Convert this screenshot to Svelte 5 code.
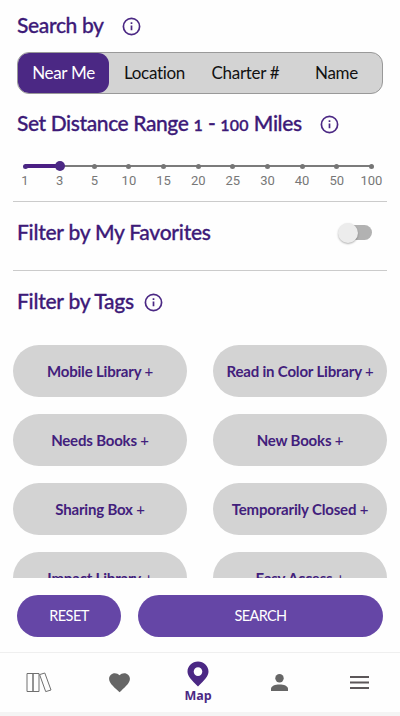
<script>
	let mode = $state('Near Me');
	let distance = $state(1);
	let favorites = $state(false);
	let selected = $state([]);

	const modes = ['Near Me', 'Location', 'Charter #', 'Name'];
	const stops = [1, 3, 5, 10, 15, 20, 25, 30, 40, 50, 100];
	const tags = [
		'Mobile Library',
		'Read in Color Library',
		'Needs Books',
		'New Books',
		'Sharing Box',
		'Temporarily Closed',
		'Impact Library',
		'Easy Access'
	];

	const toggleTag = (tag) => {
		selected = selected.includes(tag) ? selected.filter((t) => t !== tag) : [...selected, tag];
	};

	const reset = () => {
		mode = 'Near Me';
		distance = 1;
		favorites = false;
		selected = [];
	};
</script>

{#snippet info()}
	<svg class="info" viewBox="0 0 21 21" aria-hidden="true">
		<circle cx="10.500" cy="10.500" r="8.100" />
		<path d="M10.500 9.600v4.700M10.500 6.300v1.700" />
	</svg>
{/snippet}

<div class="screen">
	<main>
		<div class="heading search-by">
			<h2>Search by</h2>
			{@render info()}
		</div>

		<div class="segments">
			{#each modes as m}
				<button class:active={mode === m} onclick={() => (mode = m)}>{m}</button>
			{/each}
		</div>

		<div class="heading range">
			<h2>Set Distance Range <span class="small">1</span> - <span class="small">100</span> Miles</h2>
			{@render info()}
		</div>

		<div class="slider">
			{#each stops as stop, i}
				<button class="stop" class:filled={i < distance} class:last={i === stops.length - 1} onclick={() => (distance = i)}>
					<span class="track"><span class="dot" class:start={i < distance} class:thumb={i === distance}></span></span>
					<span class="num">{stop}</span>
				</button>
			{/each}
		</div>

		<div class="heading favorites">
			<h2>Filter by My Favorites</h2>
			<button class="switch" class:on={favorites} aria-label="My favorites" onclick={() => (favorites = !favorites)}>
				<span class="knob"></span>
			</button>
		</div>

		<div class="heading by-tags">
			<h2>Filter by Tags</h2>
			{@render info()}
		</div>

		<div class="tags">
			{#each tags as tag}
				<button class:picked={selected.includes(tag)} onclick={() => toggleTag(tag)}>{tag} <span>+</span></button>
			{/each}
		</div>
	</main>

	<div class="actions">
		<button class="reset" onclick={reset}>RESET</button>
		<button class="search">SEARCH</button>
	</div>

	<nav>
		<a href="#library" aria-label="Library">
			<svg width="26" height="22" viewBox="0 0 26 22" fill="none" stroke="#707070" stroke-width="1">
				<path d="M1 2.500h6v18H1zM7 2.500h6v18H7zM13.600 3.600l5.200-1.600 6.200 17-5.300 1.600z" />
			</svg>
		</a>
		<a href="#favorites" aria-label="Favorites">
			<svg width="25" height="25" viewBox="0 0 24 24" fill="#666">
				<path d="M12 21.350l-1.450-1.320C5.400 15.360 2 12.280 2 8.500 2 5.420 4.420 3 7.500 3c1.740 0 3.410.810 4.500 2.090C13.090 3.810 14.760 3 16.500 3 19.580 3 22 5.420 22 8.500c0 3.780-3.400 6.860-8.550 11.540L12 21.350z" />
			</svg>
		</a>
		<a href="#map" class="current">
			<svg width="22" height="26" viewBox="0 0 22 26" fill="#4b2884">
				<path fill-rule="evenodd" d="M11 .500C5.200.500.500 5 .500 10.700c0 4.300 4.300 8.800 10.500 14.800 6.200-6 10.500-10.500 10.500-14.800C21.500 5 16.800.500 11 .500zM11 6.300a4.300 4.300 0 1 1 0 8.600 4.300 4.300 0 0 1 0-8.600z" />
			</svg>
			<span>Map</span>
		</a>
		<a href="#profile" aria-label="Profile">
			<svg width="17" height="17" viewBox="0 0 17 17" fill="#666">
				<circle cx="8.500" cy="4.300" r="4.200" />
				<path d="M0 17v-2.200c0-2.700 4.200-4.200 8.500-4.200s8.500 1.500 8.500 4.200V17z" />
			</svg>
		</a>
		<a href="#menu" aria-label="Menu">
			<svg width="19" height="13" viewBox="0 0 19 13" fill="#5c5759">
				<path d="M0 0h19v2H0zM0 5.500h19v2H0zM0 11h19v2H0z" />
			</svg>
		</a>
	</nav>
</div>

<style>
	:global(body) {
		margin: 0;
		background: #fefefe;
	}

	.screen {
		display: flex;
		flex-direction: column;
		width: 400px;
		height: 716px;
		overflow: hidden;
		font-family: Lato, 'Open Sans', sans-serif;
		font-variant-ligatures: none;
	}

	button {
		margin: 0;
		padding: 0;
		border: 0;
		background: none;
		font-family: inherit;
		cursor: pointer;
	}

	main {
		height: 578px;
		flex: none;
		overflow: hidden;
	}

	.heading {
		display: flex;
		align-items: center;
		box-sizing: border-box;
		padding-left: 17px;
	}

	h2 {
		margin: 0;
		padding-bottom: 2px;
		font-size: 21px;
		font-weight: 500;
		line-height: 30px;
		letter-spacing: -0.25px;
		color: #3d1a78;
		white-space: nowrap;
		-webkit-text-stroke: 0.3px #3d1a78;
	}

	/* digits drawn at x-height, like old-style numerals */
	.small {
		font-size: 16px;
		font-weight: 600;
		letter-spacing: 0.3px;
	}

	.info {
		flex: none;
		width: 21px;
		height: 21px;
		fill: none;
		stroke: #4b2884;
		stroke-width: 1.7;
	}

	.search-by {
		height: 52px;
		gap: 17px;
	}

	.search-by h2 {
		letter-spacing: -0.35px;
	}

	.segments {
		display: grid;
		grid-template-columns: repeat(4, 1fr);
		box-sizing: border-box;
		height: 42px;
		margin: 0 17px;
		border: 1px solid #999;
		border-radius: 12px;
		background: #d3d3d3;
		overflow: hidden;
	}

	.segments button {
		padding-bottom: 1px;
		font-size: 17px;
		letter-spacing: -0.3px;
		color: #111;
	}

	.segments .active {
		border-radius: 11px;
		background: #4b2884;
		color: #fff;
	}

	.range {
		height: 61px;
		gap: 17px;
	}

	.range h2 {
		letter-spacing: -0.4px;
	}

	.slider {
		display: flex;
		box-sizing: border-box;
		height: 47px;
		margin: 0 13px;
		padding: 4px 0 0 12px;
		border-bottom: 1px solid #cbcbcb;
	}

	.stop {
		display: flex;
		flex-direction: column;
		flex: none;
		width: 34.65px;
	}

	.stop.last {
		width: 0;
	}

	.track {
		display: flex;
		align-items: center;
		width: 100%;
		height: 14px;
		background: linear-gradient(#7b7b7b, #7b7b7b) center / 100% 2px no-repeat;
	}

	.filled .track {
		background: linear-gradient(#4b1f84, #4b1f84) center / 100% 4px no-repeat;
	}

	.dot {
		flex: none;
		width: 5px;
		height: 5px;
		margin-left: -2.5px;
		border-radius: 50%;
		background: #757575;
	}

	.dot.start {
		background: #4b2884;
	}

	.dot.thumb {
		width: 10px;
		height: 10px;
		margin-left: -5px;
		background: #4b2884;
	}

	.num {
		width: 34px;
		margin-left: -17px;
		font: 13px/15px Roboto, sans-serif;
		color: #777;
		text-align: center;
	}

	.favorites {
		justify-content: space-between;
		height: 69px;
		margin: 0 13px;
		padding: 0 15px 6px 4px;
		border-bottom: 1px solid #cbcbcb;
	}

	.switch {
		display: flex;
		align-items: center;
		width: 31px;
		height: 15px;
		margin-bottom: 1px;
		border-radius: 8px;
		background: #b2b2b2;
	}

	.knob {
		width: 20px;
		height: 20px;
		margin-left: -3px;
		border-radius: 50%;
		background: #ececec;
		box-shadow: 0 1px 2px rgba(0, 0, 0, 0.3);
	}

	.on .knob {
		margin-left: 14px;
	}

	.by-tags {
		height: 62px;
		gap: 9px;
	}

	.tags {
		display: grid;
		grid-template-columns: 174px 174px;
		justify-content: space-between;
		row-gap: 17px;
		margin: 12px 13px 0;
	}

	.tags button {
		height: 52px;
		padding-bottom: 1px;
		border-radius: 26px;
		background: #d3d3d3;
		font-size: 15px;
		font-weight: 700;
		letter-spacing: -0.18px;
		color: #42207c;
		white-space: nowrap;
	}

	.tags button span {
		font-weight: 500;
	}

	.tags .picked {
		background: #c3b5dd;
	}

	.actions {
		display: flex;
		gap: 17px;
		height: 74px;
		flex: none;
		box-sizing: border-box;
		padding: 17px 17px 15px;
	}

	.actions button {
		height: 42px;
		padding-bottom: 1px;
		border-radius: 21px;
		background: #6546a6;
		font-size: 14.5px;
		letter-spacing: -0.6px;
		color: #fff;
	}

	.reset {
		width: 104px;
	}

	.search {
		flex: 1;
	}

	nav {
		display: grid;
		grid-template-columns: 78px 82px 79px 80px 80px;
		box-sizing: border-box;
		height: 64px;
		flex: none;
		border-top: 1px solid #efefef;
		border-bottom: 4px solid #f4f4f4;
	}

	nav a {
		display: flex;
		flex-direction: column;
		align-items: center;
		justify-content: center;
		padding-bottom: 1px;
		color: #4b2884;
		text-decoration: none;
	}

	.current {
		gap: 1px;
		padding: 0 3px 0 0;
	}

	.current span {
		font: 700 12.5px/16px 'Open Sans', sans-serif;
	}
</style>
